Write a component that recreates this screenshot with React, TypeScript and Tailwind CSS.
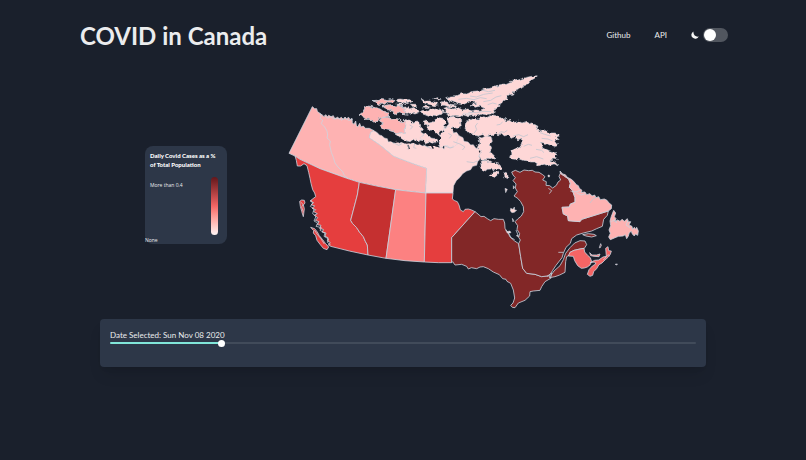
import { useState } from "react";

type Region = { name: string; fill: string; d: string };

const DARK = "#822727";
const ROSE = "#feb2b2";
const PALE = "#fed7d7";

const provinces: Region[] = [
  {
    name: "Yukon and Northwest Territories",
    fill: ROSE,
    d: "M97 125L104 131 110 131 112 139 119 145 127 150 132 155 137 149 142 155 146 151 153 155 160 152 163 159 168 160 172 156 178 161 184 157 190 163 195 156 200 161 206 157 210 164 216 160 217 173 222 178 227 168 229 181 233 186 239 175 243 186 250 183 256 190 268 190 282 197 272 202 268 218 300 240 340 273 360 281 400 296 440 310 437 384 390 379 347 374 294 364 238 352 195 338 120 311 60 283 45 273 27 265Z",
  },
  {
    name: "Nunavut",
    fill: PALE,
    d: "M282 197L292 203 298 210 306 212 313 219 322 221 325 231 334 229 340 235 350 229 358 235 366 231 374 236 381 230 391 237 400 233 411 239 420 236 426 243 437 239 441 247 449 240 455 244 463 239 468 246 478 240 486 246 492 253 494 242 488 235 493 226 502 222 500 213 508 206 500 198 503 190 516 196 519 204 530 202 537 212 549 218 552 229 564 231 572 240 580 239 587 249 600 253 604 262 598 270 600 281 593 290 590 301 578 304 572 314 560 318 548 326 540 337 529 347 521 362 519 384 437 384 440 310 400 296 360 281 340 273 300 240 268 218 272 202Z",
  },
  {
    name: "British Columbia",
    fill: "#e53e3e",
    d: "M45 273L60 283 120 311 195 338 238 352 232 390 212 466 218 476 230 488 239 502 250 515 256 529 262 540 264 570 208 558 152 544 145 540 151 533 142 527 144 518 135 514 138 504 127 502 130 493 119 491 123 481 112 479 117 470 106 466 113 458 103 451 112 446 101 440 107 434 96 430 104 423 93 419 101 413 90 408 99 401 107 395 104 384 98 374 93 355 90 340 86 322 81 302 72 296 62 303 52 303 49 286Z",
  },
  { name: "Vancouver Island", fill: "#e53e3e", d: "M92 487L104 491 112 501 118 512 128 524 136 535 146 546 141 554 130 550 120 538 111 526 107 512 100 504 101 497Z" },
  { name: "Haida Gwaii", fill: "#e53e3e", d: "M59 409L65 405 73 406 75 414 70 420 73 431 70 455 65 439 61 424Z" },
  { name: "Alberta", fill: "#c53030", d: "M238 352L294 364 347 374 318 580 264 570 262 540 256 529 250 515 239 502 230 488 218 476 212 466 232 390Z" },
  { name: "Saskatchewan", fill: "#fc8181", d: "M347 374L390 379 438 384 433 591 375 587 318 580Z" },
  { name: "Manitoba", fill: "#e53e3e", d: "M438 384L519 384 517 402 524 407 532 410 537 420 541 435 550 440 555 433 565 432 575 435 585 440 515 518 515 593 475 593 433 591Z" },
  {
    name: "Ontario",
    fill: DARK,
    d: "M585 440L594 447 603 455 612 454 622 461 632 467 642 461 655 463 670 463 674 474 675 490 684 503 690 516 704 528 716 536 722 575 728 610 740 625 765 628 785 635 808 632 812 640 795 650 785 665 780 676 760 678 750 680 749 693 735 706 715 714 705 728 697 727 692 721 699 714 704 699 700 675 692 655 681 649 678 643 668 641 658 629 640 621 625 611 610 605 600 606 590 611 574 608 565 612 560 604 545 598 525 600 518 590 515 593 515 518Z",
  },
  {
    name: "Quebec",
    fill: DARK,
    d: "M695 321L706 316 720 322 732 315 746 317 757 316 765 321 777 322 788 329 795 335 788 345 799 350 798 361 809 362 818 369 829 361 834 351 842 345 837 334 841 325 854 334 866 342 871 355 868 367 877 376 885 398 885 412 871 417 868 426 846 427 850 447 863 453 865 467 900 470 905 463 985 438 982 451 971 463 967 484 950 491 935 498 910 504 890 510 875 521 871 535 858 547 850 565 846 578 828 601 818 616 808 632 785 635 765 628 740 625 728 610 722 575 716 536 721 525 716 517 719 506 711 493 713 482 705 470 713 462 724 453 731 440 730 425 722 410 713 400 702 393 712 380 706 369 708 357 699 347 706 338 699 330Z",
  },
  {
    name: "Gaspé",
    fill: DARK,
    d: "M808 638L822 618 840 602 850 584 857 565 870 548 884 534 900 527 915 528 920 539 913 550 900 552 882 556 870 562 867 571 860 575 857 590 855 622 839 630 825 635Z",
  },
  { name: "Anticosti", fill: DARK, d: "M908 509L925 506 942 508 949 512 935 516 918 513Z" },
  {
    name: "Labrador",
    fill: ROSE,
    d: "M840 318L848 327 856 329 862 337 874 343 881 349 889 359 895 362 898 370 906 376 903 382 915 381 920 389 930 386 936 393 944 390 948 398 956 395 961 404 973 402 981 406 987 414 995 420 994 431 985 438 905 463 900 470 865 467 863 453 850 447 846 427 868 426 871 417 885 412 885 398 877 376 868 367 871 355 866 342 854 334 841 325Z",
  },
  {
    name: "Newfoundland",
    fill: ROSE,
    d: "M991 524L986 516 991 505 987 495 992 482 990 468 994 454 1001 436 1007 444 1003 455 1008 461 1004 470 1013 465 1020 469 1026 463 1033 469 1042 461 1045 470 1052 470 1047 480 1056 484 1058 493 1063 487 1067 493 1070 487 1075 498 1073 511 1066 507 1063 513 1057 507 1054 499 1048 503 1045 513 1040 521 1036 509 1029 513 1015 514 1003 519Z",
  },
  { name: "New Brunswick", fill: "#f56565", d: "M865 573L870 562 882 556 900 552 912 550 914 561 923 571 931 578 935 590 930 600 922 606 913 609 904 610 893 602 884 587 880 574Z" },
  { name: "Nova Scotia", fill: "#f56565", d: "M930 593L944 586 956 585 969 576 979 574 977 550 984 545 986 557 994 558 991 568 984 577 975 585 966 594 957 599 950 611 941 620 938 631 930 634 922 628 927 614 937 603 947 597 944 591Z" },
  { name: "Prince Edward Island", fill: "#fc8181", d: "M929 563L936 570 950 570 960 567 957 575 942 574 932 572Z" },
  { name: "Magdalen Islands", fill: DARK, d: "M958 548L962 536 964 541 960 549Z" },
  { name: "Sable Island", fill: "#fc8181", d: "M1006 598L1012 597 1010 600Z" },
  { name: "Belcher Islands", fill: PALE, d: "M692 430L699 433 703 426 704 435 710 436 703 442 696 443 691 438ZM675 370L682 373 677 383ZM700 362L704 367 700 372ZM679 500L690 498 693 503 683 505ZM709 512L714 510 716 516ZM697 460L701 466 699 471ZM804 330L809 331 808 336 804 335Z" },
];

const arcticIslands: Region[] = [
  { name: "Banks Island", fill: ROSE, d: "M237 150L248 142 253 132 258 123 272 124 288 129 300 132 310 139 324 144 326 154 312 157 300 160 292 169 281 171 269 163 255 163 247 156Z" },
  { name: "Victoria Island west", fill: ROSE, d: "M298 167L307 158 320 157 334 163 350 161 363 169 379 169 375 206 360 203 350 208 340 200 325 196 309 191 301 182 313 177Z" },
  { name: "Victoria Island east", fill: PALE, d: "M379 169L372 163 390 166 398 172 408 168 416 171 419 182 427 190 422 198 433 205 430 213 443 219 437 228 421 226 410 231 400 223 390 230 376 226 366 222 357 214 350 208 360 203 375 206Z" },
  { name: "Baffin Island", fill: PALE,
    d: "M555 190L560 175 568 164 582 160 595 162 608 155 619 158 632 152 645 155 654 153 664 160 675 158 680 168 692 166 700 173 714 168 726 174 737 170 746 177 758 174 767 180 774 184 770 194 780 198 791 201 800 198 813 204 824 204 836 207 837 213 829 217 835 222 826 228 832 236 828 245 818 242 806 240 795 234 781 232 790 240 785 246 799 253 808 257 824 260 831 268 825 272 832 284 821 282 809 286 825 292 836 303 820 297 808 302 790 298 776 302 764 294 752 294 740 287 728 286 715 281 705 283 692 281 686 273 694 268 696 259 707 254 713 246 726 243 729 232 722 220 710 225 705 215 693 220 686 210 676 213 668 205 657 210 650 204 640 213 630 206 620 214 607 209 595 213 580 210 570 208 562 200Z" },
  { name: "Melville Peninsula", fill: PALE, d: "M594 215L606 219 616 213 633 215 637 229 630 238 635 249 629 260 640 269 648 279 635 278 620 284 603 282 597 272 603 261 594 247 600 234Z" },
  { name: "Southampton Island", fill: PALE, d: "M600 285L613 284 620 289 634 288 644 294 656 297 666 307 660 312 648 311 643 318 633 312 622 313 616 318 608 316 604 305Z" },
  { name: "Coats Island", fill: PALE, d: "M631 331L640 322 651 320 655 326 648 334 637 338Z" },
  { name: "Mansel Island", fill: PALE, d: "M676 322L683 325 684 337 678 341 673 332Z" },
  { name: "Ellesmere Island", fill: PALE,
    d: "M497 98L512 93 530 92 545 86 560 87 580 79 602 77 620 71 640 68 655 60 675 57 690 50 712 46 735 38 755 34 773 32 762 41 748 48 744 58 728 64 716 73 702 78 698 87 684 91 681 101 671 106 665 114 655 119 657 127 644 133 647 141 635 146 620 149 604 147 590 153 576 149 560 153 548 149 552 142 570 139 585 135 600 136 614 130 600 124 586 127 573 119 588 115 579 109 564 112 549 119 532 116 519 111 507 108Z" },
  { name: "Devon Island", fill: PALE, d: "M490 130L505 126 519 132 535 128 548 135 564 132 578 140 570 149 553 147 540 153 524 151 510 154 500 147 489 146 496 138Z" },
  { name: "Somerset Island", fill: PALE, d: "M505 157L519 154 533 160 543 164 539 173 541 184 530 193 519 188 507 194 499 185 507 177 503 167Z" },
  { name: "Prince of Wales Island", fill: PALE, d: "M429 169L441 165 446 174 456 172 463 165 479 161 491 163 497 171 493 181 499 187 491 196 479 197 481 207 469 206 460 197 450 195 441 188 448 181 438 178Z" },
  { name: "King William Island", fill: PALE, d: "M423 215L434 205 445 209 453 219 465 221 471 230 459 235 446 230 436 233 427 225Z" },
  { name: "Boothia Peninsula", fill: PALE, d: "M480 247L474 231 482 222 480 209 493 201 490 190 503 186 514 194 526 207 535 216 525 243Z" },
  { name: "Bathurst Island", fill: PALE, d: "M420 144L431 136 445 139 451 131 464 133 475 130 489 138 487 147 473 152 458 151 446 154 434 149Z" },
  { name: "Melville Island", fill: ROSE, d: "M306 125L318 121 332 119 343 124 355 119 366 125 377 129 370 136 380 139 374 147 361 144 349 149 338 142 327 140 332 133 318 130Z" },
  { name: "Melville Island east", fill: PALE, d: "M366 125L380 123 388 131 400 128 411 134 416 143 405 147 393 144 382 148 374 147 380 139 370 136 377 129Z" },
  { name: "Prince Patrick Island", fill: ROSE, d: "M276 107L290 106 306 104 320 106 333 101 343 105 336 112 322 111 314 117 299 118 290 112Z" },
  { name: "Mackenzie King Island", fill: PALE, d: "M348 104L360 102 376 104 390 104 396 110 382 116 368 112 356 113Z" },
  { name: "Ellef Ringnes Island", fill: PALE, d: "M424 103L436 106 449 105 460 110 470 112 474 119 460 122 447 118 434 115Z" },
  { name: "Cornwall Island", fill: PALE, d: "M461 101L473 98 482 101 474 106ZM484 110L501 111 512 118 529 120 527 126 510 125 496 121 483 121ZM434 123L448 126 441 131 429 129Z" },
  { name: "Lougheed Island", fill: PALE, d: "M391 117L404 118 411 124 400 127ZM350 117L367 117 372 121 357 122Z" },
];

/* Straits and inlets cut into the northern archipelago. */
const channels =
  "M535 103L560 100 582 104 601 98 620 101M570 93L589 96 611 88 638 84M610 110L632 106 648 96 664 92M623 119L638 114 650 117M565 142L590 143 612 139 634 140M605 75L625 80 645 76M582 205L590 194 586 183 593 174M655 208L662 200 673 202 682 196M700 213L716 209 731 215 744 209M731 244L745 238 756 241M768 253L785 256 792 263M750 280L770 275 790 282M520 230L540 237 555 246 547 255M560 290L580 293 592 288M380 237L388 246 382 253M430 240L446 247 455 252M495 243L510 249 521 246M505 205L515 211 508 220M389 180L398 185 391 193M780 203L794 208 812 213M785 220L804 222 818 228M668 170L661 178 650 180M404 236L401 248 409 250M340 233L356 241 366 236M930 414L941 400 951 397M805 370L815 377 808 386M835 562L850 562";

/* Queen Maud Gulf and the narrow sounds along the mainland, open water. */
const sounds = "M328 225L345 232 362 228 380 234 398 231 416 238M418 236L440 242 462 240 480 246M384 240L388 252M455 242L460 251M488 222L496 230 490 240M600 240L604 251 598 262";

const coastDetail =
  "M119 143L124 153 120 160 128 166 124 176 134 186 141 198 143 210 141 219 151 228 149 240 154 262 160 277 165 294 174 306 188 320 193 331 205 341M93 405L98 415 91 424 102 432 98 446 108 454 102 468 113 474 108 484 124 488 120 496 135 504 132 514 146 522 142 532 152 540M103 495L112 508 122 520 133 537M62 411L69 418 65 426 70 442M134 152L143 159 152 155 162 162 174 160 185 165 194 160 207 166 218 163M871 378L888 381 900 376M890 384L904 390 916 386M994 470L1004 464 1010 474M1044 466L1038 480 1050 488M970 585L984 569 989 573M801 634L815 624 812 640M675 494L685 503 693 518 704 524M708 495L714 510";

function RegionPaths({ items }: { items: Region[] }) {
  return (
    <>
      {items.map((r) => (
        <path key={r.name} d={r.d} fill={r.fill} stroke="#cbd5e0" strokeWidth={r.fill === PALE ? 2 : 3} strokeOpacity={0.8} />
      ))}
    </>
  );
}

function CanadaMap() {
  return (
    <svg viewBox="0 0 1110 750" role="img" aria-label="Map of Canada" className="block w-full" strokeLinejoin="round">
      <defs>
        {/* Roughens the island outlines into fjords and bays. */}
        <filter id="fjords" x="0" y="0" width="1110" height="400" filterUnits="userSpaceOnUse" colorInterpolationFilters="sRGB">
          <feTurbulence type="fractalNoise" baseFrequency="0.06" numOctaves="3" seed="4" />
          <feDisplacementMap in="SourceGraphic" scale="14" xChannelSelector="R" yChannelSelector="G" />
        </filter>
      </defs>
      <RegionPaths items={provinces} />
      <path d={sounds} fill="none" stroke="#1a202c" strokeWidth={4} />
      <g filter="url(#fjords)">
        <RegionPaths items={arcticIslands} />
      </g>
      <path d={channels} fill="none" stroke="#c3c6d0" strokeWidth={2.5} />
      <path d={coastDetail} fill="none" stroke="#cbd5e0" strokeWidth={3} strokeOpacity={0.75} />
    </svg>
  );
}

const FIRST_DAY = new Date(2020, 8, 29);
const DAYS = 215;

export default function App() {
  const [day, setDay] = useState(40);
  const [light, setLight] = useState(false);
  const date = new Date(FIRST_DAY);
  date.setDate(date.getDate() + day);

  return (
    <div className="min-h-screen bg-[#1a202c] font-[Lato,'Open_Sans',sans-serif] text-[#ebecee]">
      <header className="flex h-[69px] items-center justify-between pr-[78px] pl-20">
        <h1 className="pt-[2px] text-[24px] leading-8 font-bold">COVID in Canada</h1>
        <nav className="flex items-center text-[8px] leading-3">
          <a href="#github" className="mr-6">Github</a>
          <a href="#api" className="mr-6">API</a>
          <label className="flex cursor-pointer items-center gap-1">
            <svg viewBox="0 0 16 16" className="size-2" fill="#f5f5f5" aria-hidden="true">
              <path d="M5 0.8A7.7 7.7 0 1 0 15.4 11C10 12.5 3.800 8 5 0.8Z" />
            </svg>
            <input
              type="checkbox"
              role="switch"
              aria-label="Light mode"
              checked={light}
              onChange={(e) => setLight(e.target.checked)}
              className="h-[14px] w-[25px] cursor-pointer appearance-none rounded-full bg-[#51565f] p-px before:block before:size-3 before:rounded-full before:bg-white checked:before:translate-x-[11px]"
            />
          </label>
        </nav>
      </header>

      <main>
        <section className="mx-auto flex w-full max-w-[516px] items-center justify-between pr-[11px]">
          <aside className="mb-[-6px] flex h-[98px] w-[82px] shrink-0 flex-col justify-between rounded-lg bg-[#2d3748] font-['Open_Sans',sans-serif] text-[5px] leading-2">
            <div className="pt-[5px] pl-[5px]">
              <h2 className="font-[Lato,sans-serif] text-[6px] leading-[9px] font-black whitespace-nowrap text-white">
                Daily Covid Cases as a %<br />of Total Population
              </h2>
              <div className="mt-2 flex justify-between pr-[9px]">
                <p className="pt-1">More than 0.4</p>
                <div className="h-[58px] w-[7px] rounded-full bg-linear-to-b from-[#63171b] via-[#f56565] to-[#fff5f5]" />
              </div>
            </div>
            <p>None</p>
          </aside>
          <div className="-mt-1 w-[370px]">
            <CanadaMap />
          </div>
        </section>

        <section className="mx-auto mt-1 h-12 w-full max-w-[606px] rounded bg-[#2d3748] px-[10px] pt-[10px] shadow-lg">
          <label htmlFor="date" className="block text-[8px] leading-3">
            Date Selected: {date.toDateString()}
          </label>
          <input
            id="date"
            type="range"
            min={0}
            max={DAYS}
            value={day}
            onChange={(e) => setDay(Number(e.target.value))}
            style={{
              backgroundImage: `linear-gradient(to right, #81e6d9 ${(day / DAYS) * 100}%, #414b5a ${(day / DAYS) * 100}%)`,
            }}
            className="mt-px block h-[2px] w-full cursor-pointer appearance-none rounded-full [&::-webkit-slider-thumb]:size-[7px] [&::-webkit-slider-thumb]:appearance-none [&::-webkit-slider-thumb]:rounded-full [&::-webkit-slider-thumb]:bg-white"
          />
        </section>
      </main>
    </div>
  );
}
